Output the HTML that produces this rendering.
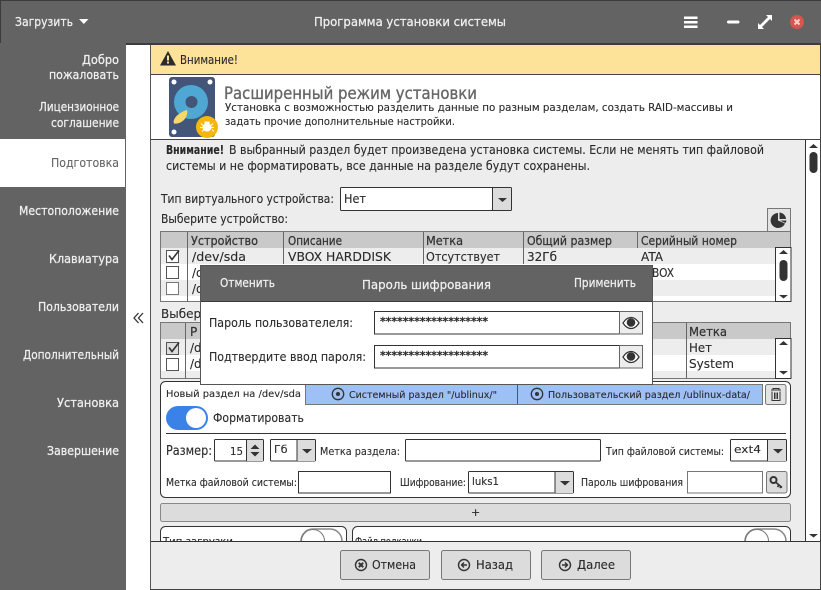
<!DOCTYPE html>
<html lang="ru"><head><meta charset="utf-8"><title>Программа установки системы</title>
<style>
html,body{margin:0;padding:0;width:821px;height:590px;overflow:hidden;background:#fff}
svg{display:block}
text{font-family:"DejaVu Sans","Liberation Sans",sans-serif;font-size:12px;fill:#2a2a2a;stroke:#2a2a2a;stroke-width:.12px}
.w{fill:#fff}.s{fill:#f0f0f0;font-size:12px;stroke:#f0f0f0;stroke-width:.25px}
.g{fill:#666;stroke:#666}.sm{font-size:11px}.xs{font-size:10px}
.b{stroke:#333;stroke-width:1;fill:#fff}
.h{fill:#333;font-size:12px;stroke:#333;stroke-width:.25px}
</style></head><body>
<svg width="821" height="590" viewBox="0 0 821 590" xmlns="http://www.w3.org/2000/svg">
<rect width="821" height="590" fill="#fff"/>
<!-- title bar & sidebar -->
<rect x="0" y="0" width="821" height="44" fill="#636363"/>
<rect x="0" y="0" width="821" height="1" fill="#3c3c3c"/>
<rect x="0" y="0" width="1" height="43" fill="#3c3c3c"/>
<rect x="125" y="43" width="696" height="2" fill="#3c3c3c"/>
<rect x="0" y="43" width="126" height="547" fill="#636363"/>
<rect x="0" y="139" width="125" height="48" fill="#fff"/>
<text x="15" y="26" textLength="58" lengthAdjust="spacingAndGlyphs" class="s">Загрузить</text>
<path d="M79 19h9.500l-4.700 5z" fill="#fff"/>
<text x="314" y="26" textLength="192" lengthAdjust="spacingAndGlyphs" class="s">Программа установки системы</text>
<g fill="#fff"><rect x="684" y="16.500" width="13.500" height="2.500"/><rect x="684" y="21" width="13.500" height="2.500"/><rect x="684" y="25.500" width="13.500" height="2.500"/>
<rect x="727" y="20.500" width="12.500" height="3" rx="1.500"/>
<path d="M772 15v6l-2-2-8 8 2 2h-6v-6l2 2 8-8-2-2z"/></g>
<circle cx="797" cy="22" r="7" fill="#d9534f"/>
<path d="M794.500 19.500l5 5m0-5l-5 5" stroke="#f6d0ce" stroke-width="2"/>
<g text-anchor="start">
<text x="82" y="64" textLength="37" lengthAdjust="spacingAndGlyphs" class="s">Добро</text>
<text x="49" y="79" textLength="70" lengthAdjust="spacingAndGlyphs" class="s">пожаловать</text>
<text x="39" y="111" textLength="80" lengthAdjust="spacingAndGlyphs" class="s">Лицензионное</text>
<text x="51" y="127" textLength="68" lengthAdjust="spacingAndGlyphs" class="s">соглашение</text>
<text x="51" y="167" textLength="68" lengthAdjust="spacingAndGlyphs" class="g">Подготовка</text>
<text x="19" y="215" textLength="100" lengthAdjust="spacingAndGlyphs" class="s">Местоположение</text>
<text x="49" y="263" textLength="70" lengthAdjust="spacingAndGlyphs" class="s">Клавиатура</text>
<text x="38" y="311" textLength="81" lengthAdjust="spacingAndGlyphs" class="s">Пользователи</text>
<text x="23" y="359" textLength="96" lengthAdjust="spacingAndGlyphs" class="s">Дополнительный</text>
<text x="57" y="407" textLength="62" lengthAdjust="spacingAndGlyphs" class="s">Установка</text>
<text x="47" y="455" textLength="72" lengthAdjust="spacingAndGlyphs" class="s">Завершение</text>
</g>
<path d="M138.500 313l-4.500 5 4.500 5M143 313l-4.500 5 4.500 5" fill="none" stroke="#333" stroke-width="1.300"/>
<!-- main -->
<rect x="150" y="45" width="671" height="545" fill="#fff"/>
<rect x="150" y="45" width="1" height="545" fill="#555"/>
<rect x="151" y="45" width="670" height="29" fill="#fde299"/>
<rect x="151" y="74" width="670" height="1" fill="#444"/>
<rect x="151" y="139" width="670" height="1" fill="#444"/>
<path d="M168 51l8 14.500h-16z" fill="#2b2b2b"/><rect x="167" y="55.500" width="2" height="5" fill="#fde299"/><rect x="167" y="61.500" width="2" height="2" fill="#fde299"/>
<text x="180" y="64" textLength="58" lengthAdjust="spacingAndGlyphs">Внимание!</text>
<!-- hdd -->
<rect x="169" y="77" width="46" height="60" rx="3" fill="#44557a"/>
<circle cx="174" cy="82" r="2.500" fill="#fff"/><circle cx="210" cy="82" r="2.500" fill="#fff"/><circle cx="174" cy="132" r="2.500" fill="#fff"/>
<circle cx="191" cy="102" r="17" fill="#4fa8d3"/><circle cx="191.500" cy="102" r="6" fill="#44557a"/>
<path d="M187 110c1 4-1 9-5 11.500-2 1.500-5 2.500-8 2-1-2 0-5 3-8 3-2.500 6-4.500 10-5.500z" fill="#f6d76a"/>
<circle cx="207" cy="127" r="11" fill="#f4b70d"/>
<ellipse cx="207" cy="127.500" rx="4.500" ry="4" fill="#fff"/><rect x="204.500" y="121.500" width="5" height="3" fill="#fff"/>
<path d="M201 123.500l2 2m10-2l-2 2m-11 2h3m11 0h-3m-9 4l2-2m10 2l-2-2" stroke="#fff" stroke-width="1"/>
<text x="224" y="99" textLength="253" lengthAdjust="spacingAndGlyphs" style="font-size:17px;fill:#666;stroke:#666;stroke-width:.35px">Расширенный режим установки</text>
<text x="225" y="111" textLength="508" lengthAdjust="spacingAndGlyphs" class="sm">Установка с возможностью разделить данные по разным разделам, создать RAID-массивы и</text>
<text x="225" y="125" textLength="230" lengthAdjust="spacingAndGlyphs" class="sm">задать прочие дополнительные настройки.</text>
<!-- content -->
<rect x="151" y="140" width="654" height="401" fill="#ededed"/>
<rect x="805" y="140" width="1" height="401" fill="#333"/>
<rect x="806" y="140" width="14" height="401" fill="#fff"/>
<rect x="820" y="45" width="1" height="545" fill="#444"/>
<path d="M809 148l4.500-4 4.500 4z" fill="#333"/><rect x="809.500" y="152" width="8" height="21" rx="4" fill="#333"/>
<path d="M809 534h9l-4.500 3.500z" fill="#333"/>
<text x="166" y="154" textLength="58" lengthAdjust="spacingAndGlyphs" style="font-weight:bold">Внимание!</text>
<text x="229" y="154" textLength="535" lengthAdjust="spacingAndGlyphs">В выбранный раздел будет произведена установка системы. Если не менять тип файловой</text>
<text x="166" y="170" textLength="424" lengthAdjust="spacingAndGlyphs">системы и не форматировать, все данные на разделе будут сохранены.</text>
<text x="161" y="203" textLength="173" lengthAdjust="spacingAndGlyphs">Тип виртуального устройства:</text>
<rect x="340.500" y="187.500" width="171" height="23" rx="1" class="b"/>
<rect x="492.500" y="188" width="18.500" height="22" fill="#dcdcdc"/><rect x="492" y="188" width="1" height="22" fill="#333"/>
<path d="M498 198h9l-4.500 4z" fill="#333"/>
<text x="344" y="203" textLength="22" lengthAdjust="spacingAndGlyphs">Нет</text>
<text x="161" y="223" textLength="127" lengthAdjust="spacingAndGlyphs">Выберите устройство:</text>
<rect x="767.500" y="208.500" width="23" height="23" fill="#e3e3e3" stroke="#777"/>
<path d="M778 213a7.500 7.500 0 1 0 7 10.500l-7-3z" fill="#333"/><path d="M779.500 212.500a7 7 0 0 1 6.500 6.500h-6.500z" fill="#333"/><path d="M780 220.500l6.500 0a7 7 0 0 1-1 2.500z" fill="#333"/>
<!-- table 1 -->
<rect x="160" y="231" width="631" height="71" fill="#fff"/>
<rect x="160" y="231" width="631" height="17" fill="#c9c9c9"/>
<rect x="160" y="248" width="615" height="16" fill="#ededed"/>
<rect x="160" y="280" width="615" height="16" fill="#ededed"/>
<rect x="160.500" y="231.500" width="630" height="70" fill="none" stroke="#777"/>
<path d="M187.500 232v70M283.500 232v32M423.500 232v32M523.500 232v32M637.500 232v16" stroke="#666" fill="none"/>
<rect x="775.500" y="247.500" width="15.500" height="54" fill="#fff" stroke="#333"/>
<path d="M779 254l4.500-4 4.500 4z" fill="#333"/><rect x="779.500" y="260" width="8" height="21" rx="4" fill="#333"/><path d="M779 295h9l-4.500 3.500z" fill="#333"/>
<text x="191" y="245" textLength="67" lengthAdjust="spacingAndGlyphs" class="h">Устройство</text>
<text x="288" y="245" textLength="54" lengthAdjust="spacingAndGlyphs" class="h">Описание</text>
<text x="426" y="245" textLength="37" lengthAdjust="spacingAndGlyphs" class="h">Метка</text>
<text x="527" y="245" textLength="85" lengthAdjust="spacingAndGlyphs" class="h">Общий размер</text>
<text x="641" y="245" textLength="96" lengthAdjust="spacingAndGlyphs" class="h">Серийный номер</text>
<text x="192" y="261" textLength="54" lengthAdjust="spacingAndGlyphs">/dev/sda</text>
<text x="288" y="261" textLength="103" lengthAdjust="spacingAndGlyphs">VBOX HARDDISK</text>
<text x="426" y="261" textLength="74" lengthAdjust="spacingAndGlyphs">Отсутствует</text>
<text x="527" y="261" textLength="30" lengthAdjust="spacingAndGlyphs">32Гб</text>
<text x="641" y="261" textLength="22" lengthAdjust="spacingAndGlyphs">ATA</text>
<text x="652" y="277" textLength="22" lengthAdjust="spacingAndGlyphs">BOX</text>
<text x="192" y="277">/d</text><text x="192" y="293">/d</text>
<rect x="166.500" y="250.500" width="12" height="12" fill="#fff" stroke="#555"/><path d="M169 255.500l3 4 7-9" fill="none" stroke="#333" stroke-width="1.600"/>
<rect x="166.500" y="266.500" width="12" height="12" fill="#fff" stroke="#555"/>
<rect x="166.500" y="282.500" width="12" height="12" fill="#fff" stroke="#777"/>
<!-- table 2 -->
<text x="161" y="318">Выбери</text>
<rect x="160" y="322" width="631" height="56" fill="#fff"/>
<rect x="160" y="322" width="631" height="17" fill="#c9c9c9"/>
<rect x="160" y="339" width="615" height="16" fill="#ededed"/>
<rect x="160" y="371" width="615" height="7" fill="#ededed"/>
<rect x="160.500" y="322.500" width="630" height="56" fill="none" stroke="#777"/>
<path d="M185.500 323v56M686.500 323v56" stroke="#666" fill="none"/>
<rect x="775.500" y="338.500" width="15.500" height="40" fill="#fff" stroke="#333"/>
<path d="M779 345l4.500-4 4.500 4z" fill="#333"/><path d="M779 371h9l-4.500 3.500z" fill="#333"/>
<text x="190" y="336" class="h">Р</text>
<text x="689" y="336" textLength="38" lengthAdjust="spacingAndGlyphs" class="h">Метка</text>
<text x="689" y="352" textLength="23" lengthAdjust="spacingAndGlyphs">Нет</text>
<text x="689" y="368" textLength="45" lengthAdjust="spacingAndGlyphs">System</text>
<text x="190" y="352">/d</text><text x="190" y="368">/d</text>
<rect x="166.500" y="342.500" width="12" height="12" fill="#ddd" stroke="#555"/><path d="M169 347.500l3 4 7-9" fill="none" stroke="#333" stroke-width="1.600"/>
<rect x="166.500" y="358.500" width="12" height="12" fill="#fff" stroke="#555"/>
<!-- group box -->
<rect x="160.500" y="381.500" width="630" height="116" rx="5" fill="#fff" stroke="#333"/>
<path d="M305.500 384.500H762.500V404.500H305.500z" fill="#9dc0f5" stroke="#777"/>
<path d="M517.500 385v19" stroke="#555"/>
<text x="166" y="397" textLength="135" lengthAdjust="spacingAndGlyphs" class="xs">Новый раздел на /dev/sda</text>
<circle cx="338" cy="394" r="5.700" fill="none" stroke="#333" stroke-width="1.300"/><circle cx="338" cy="394" r="2" fill="#333"/>
<text x="349" y="398" textLength="148" lengthAdjust="spacingAndGlyphs" class="xs">Системный раздел "/ublinux/"</text>
<circle cx="537" cy="394" r="5.700" fill="none" stroke="#333" stroke-width="1.300"/><circle cx="537" cy="394" r="2" fill="#333"/>
<text x="548" y="398" textLength="202" lengthAdjust="spacingAndGlyphs" class="xs">Пользовательский раздел /ublinux-data/</text>
<rect x="765.500" y="384.500" width="20.500" height="20" rx="2" fill="#e3e3e3" stroke="#777"/>
<path d="M771 390h10M773 390v-1.500h6v1.500M772 391.500v9h8v-9M774.500 392.500v6.500M776 392.500v6.500M777.500 392.500v6.500" fill="none" stroke="#333"/>
<rect x="166" y="406" width="42" height="24" rx="12" fill="#3b82e8"/><circle cx="196" cy="418" r="10" fill="#fff"/>
<text x="213" y="422" textLength="91" lengthAdjust="spacingAndGlyphs">Форматировать</text>
<rect x="166" y="433" width="620" height="1" fill="#333"/>
<text x="166" y="455" textLength="46" lengthAdjust="spacingAndGlyphs" style="font-size:13px">Размер:</text>
<rect x="214.500" y="439.500" width="49" height="21.500" rx="1" class="b"/>
<rect x="247" y="440" width="16" height="21" fill="#dcdcdc"/><rect x="246" y="440" width="1" height="21" fill="#333"/>
<path d="M250.500 449l4.500-4.500 4.500 4.500zM250.500 452l4.500 4.500 4.500-4.500z" fill="#333"/>
<text x="230" y="455" textLength="13" lengthAdjust="spacingAndGlyphs" class="sm">15</text>
<rect x="270.500" y="439.500" width="45" height="21.500" rx="1" class="b"/>
<rect x="297" y="440" width="18" height="21" fill="#dcdcdc"/><rect x="296.500" y="440" width="1" height="21" fill="#333"/>
<path d="M302 449h10l-5 4.500z" fill="#333"/>
<text x="274" y="453" class="sm">Гб</text>
<text x="320" y="455" textLength="80" lengthAdjust="spacingAndGlyphs" class="sm">Метка раздела:</text>
<rect x="405.500" y="439.500" width="195" height="21.500" rx="1" class="b"/>
<text x="606" y="455" textLength="118" lengthAdjust="spacingAndGlyphs" class="sm">Тип файловой системы:</text>
<rect x="730.500" y="439.500" width="56" height="21.500" rx="1" class="b"/>
<rect x="768" y="440" width="18" height="21" fill="#dcdcdc"/><rect x="767" y="440" width="1" height="21" fill="#333"/>
<path d="M773 449h10l-5 4.500z" fill="#333"/>
<text x="734" y="453" textLength="27" lengthAdjust="spacingAndGlyphs" class="sm">ext4</text>
<text x="166" y="486" textLength="131" lengthAdjust="spacingAndGlyphs" class="sm">Метка файловой системы:</text>
<rect x="298.500" y="471.500" width="92" height="21.500" class="b"/>
<text x="400" y="486" textLength="66" lengthAdjust="spacingAndGlyphs" class="sm">Шифрование:</text>
<rect x="468.500" y="471.500" width="105" height="21.500" rx="1" class="b"/>
<rect x="555" y="472" width="18" height="21" fill="#dcdcdc"/><rect x="554.500" y="472" width="1" height="21" fill="#333"/>
<path d="M560 481h10l-5 4.500z" fill="#333"/>
<text x="472" y="485" textLength="27" lengthAdjust="spacingAndGlyphs" class="sm">luks1</text>
<text x="581" y="486" textLength="102" lengthAdjust="spacingAndGlyphs" class="sm">Пароль шифрования</text>
<rect x="687.500" y="471.500" width="75" height="21.500" fill="#fff" stroke="#777"/>
<rect x="766.500" y="471.500" width="20.500" height="21.500" rx="2" fill="#dcdcdc" stroke="#777"/>
<circle cx="773.500" cy="480" r="3" fill="none" stroke="#333" stroke-width="2"/><path d="M776 482.500l6 5M779 485l-1.500 2M781 486.500l-1 1.500" stroke="#333" stroke-width="1.700" fill="none"/>
<rect x="160.500" y="503.500" width="630" height="18" rx="2" fill="#dcdcdc" stroke="#888"/>
<text x="471" y="516" class="sm">+</text>
<rect x="160.500" y="526.500" width="186" height="30" rx="5" fill="#fff" stroke="#333"/>
<rect x="352.500" y="526.500" width="438" height="30" rx="5" fill="#fff" stroke="#333"/>
<text x="163" y="545" textLength="70" lengthAdjust="spacingAndGlyphs" class="sm">Тип загрузки</text>
<text x="355" y="545" textLength="67" lengthAdjust="spacingAndGlyphs" class="sm">Файл подкачки</text>
<rect x="301" y="529" width="41" height="24" rx="12" fill="#fff" stroke="#888" stroke-width="1.500"/><circle cx="313" cy="541" r="11.500" fill="#fff" stroke="#777"/>
<rect x="745" y="529" width="41" height="24" rx="12" fill="#fff" stroke="#888" stroke-width="1.500"/><circle cx="757" cy="541" r="11.500" fill="#fff" stroke="#777"/>
<!-- modal -->
<rect x="200" y="265" width="453" height="120" fill="#fff"/>
<rect x="200" y="265" width="453" height="37" fill="#636363"/>
<rect x="200" y="265" width="453" height="1" fill="#4a4a4a"/>
<rect x="200" y="301" width="453" height="1" fill="#3c3c3c"/>
<rect x="200.500" y="265.500" width="452" height="119" fill="none" stroke="#555"/>
<text x="220" y="287" textLength="55" lengthAdjust="spacingAndGlyphs" class="s">Отменить</text>
<text x="362" y="289" textLength="129" lengthAdjust="spacingAndGlyphs" class="s">Пароль шифрования</text>
<text x="574" y="287" textLength="62" lengthAdjust="spacingAndGlyphs" class="s">Применить</text>
<text x="209" y="327" textLength="144" lengthAdjust="spacingAndGlyphs">Пароль пользователеля:</text>
<text x="209" y="361" textLength="157" lengthAdjust="spacingAndGlyphs">Подтвердите ввод пароля:</text>
<rect x="374.500" y="311.500" width="245" height="22.500" fill="#fff" stroke="#333"/>
<rect x="374.500" y="345.500" width="245" height="22.500" fill="#fff" stroke="#333"/>
<rect x="619.500" y="311.500" width="23" height="22.500" fill="#ededed" stroke="#666"/>
<rect x="619.500" y="345.500" width="23" height="22.500" fill="#ededed" stroke="#666"/>
<text x="380" y="325" textLength="108" lengthAdjust="spacingAndGlyphs" class="sm" style="stroke-width:.4px">*******************</text>
<text x="380" y="359" textLength="108" lengthAdjust="spacingAndGlyphs" class="sm" style="stroke-width:.4px">*******************</text>
<path d="M623 323c2.500-4 5.500-5.500 8-5.500s5.500 1.500 8 5.500c-2.500 4-5.500 5.500-8 5.500s-5.500-1.500-8-5.500z" fill="#fff" stroke="#333" stroke-width="1.200"/><circle cx="631" cy="322.500" r="4.300" fill="#333"/>
<path d="M623 357c2.500-4 5.500-5.500 8-5.500s5.500 1.500 8 5.500c-2.500 4-5.500 5.500-8 5.500s-5.500-1.500-8-5.500z" fill="#fff" stroke="#333" stroke-width="1.200"/><circle cx="631" cy="356.500" r="4.300" fill="#333"/>
<!-- footer -->
<rect x="151" y="541" width="669" height="48" fill="#ededed"/>
<rect x="151" y="541" width="670" height="1" fill="#333"/>
<rect x="150" y="589" width="671" height="1" fill="#444"/>
<rect x="340.500" y="550.500" width="89" height="29" rx="2" fill="#dcdcdc" stroke="#777"/>
<rect x="441.500" y="550.500" width="89" height="29" rx="2" fill="#dcdcdc" stroke="#777"/>
<rect x="541.500" y="550.500" width="89" height="29" rx="2" fill="#dcdcdc" stroke="#777"/>
<circle cx="361" cy="565" r="5.500" fill="none" stroke="#333" stroke-width="1.400"/><path d="M358.800 562.800l4.400 4.400m0-4.400l-4.400 4.400" stroke="#333" stroke-width="2"/>
<circle cx="464" cy="565" r="5.500" fill="none" stroke="#333" stroke-width="1.400"/><path d="M467 565h-5M464 562.500l-2.500 2.500 2.500 2.500" stroke="#333" stroke-width="1.400" fill="none"/>
<circle cx="565" cy="565" r="5.500" fill="none" stroke="#333" stroke-width="1.400"/><path d="M562 565h5M565 562.500l2.500 2.500-2.500 2.500" stroke="#333" stroke-width="1.400" fill="none"/>
<text x="372" y="569" textLength="44" lengthAdjust="spacingAndGlyphs">Отмена</text>
<text x="476" y="569" textLength="37" lengthAdjust="spacingAndGlyphs">Назад</text>
<text x="577" y="569" textLength="38" lengthAdjust="spacingAndGlyphs">Далее</text>
</svg>
</body></html>
